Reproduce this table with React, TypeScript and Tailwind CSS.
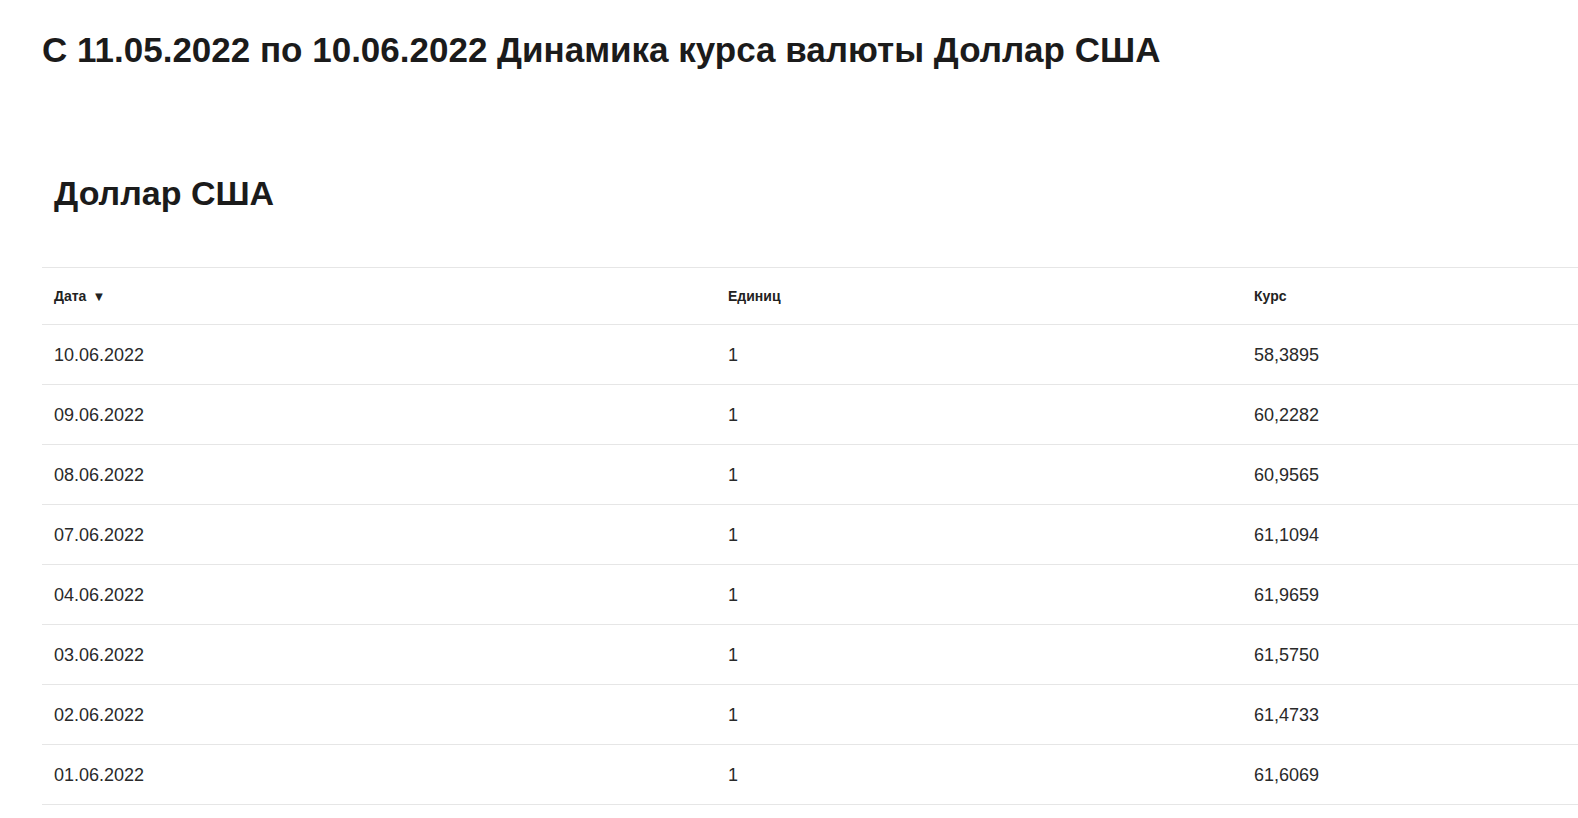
const rows = [
  { date: '10.06.2022', units: '1', rate: '58,3895' },
  { date: '09.06.2022', units: '1', rate: '60,2282' },
  { date: '08.06.2022', units: '1', rate: '60,9565' },
  { date: '07.06.2022', units: '1', rate: '61,1094' },
  { date: '04.06.2022', units: '1', rate: '61,9659' },
  { date: '03.06.2022', units: '1', rate: '61,5750' },
  { date: '02.06.2022', units: '1', rate: '61,4733' },
  { date: '01.06.2022', units: '1', rate: '61,6069' },
];

export default function App() {
  return (
    <div className="min-h-screen bg-white pl-[42px] pt-[28px] font-['Liberation_Sans',Arial,sans-serif] text-[#1b1b1b] overflow-hidden">
      <h1 className="text-[35px] font-bold leading-[44px] whitespace-nowrap">
        С 11.05.2022 по 10.06.2022 Динамика курса валюты Доллар США
      </h1>

      <h2 className="mt-[99px] pl-3 text-[34px] font-bold leading-[44px]">Доллар США</h2>

      <div className="mt-[52px] w-[1560px] border-t border-[#e6e6e6]">
        <div className="grid grid-cols-[674px_526px_1fr] h-[57px] items-center border-b border-[#e6e6e6] text-[14px] font-bold text-[#222]">
          <div className="px-3 flex items-center gap-1.5 pt-px">
            Дата <span className="text-[13px]">▼</span>
          </div>
          <div className="px-3 pt-px">Единиц</div>
          <div className="px-3 pt-px">Курс</div>
        </div>
        {rows.map((r) => (
          <div
            key={r.date}
            className="grid grid-cols-[674px_526px_1fr] h-[60px] items-center border-b border-[#e6e6e6] text-[18px] text-[#2a2a2a]"
          >
            <div className="px-3 pt-0.5">{r.date}</div>
            <div className="px-3 pt-0.5">{r.units}</div>
            <div className="px-3 pt-0.5">{r.rate}</div>
          </div>
        ))}
      </div>
    </div>
  );
}
